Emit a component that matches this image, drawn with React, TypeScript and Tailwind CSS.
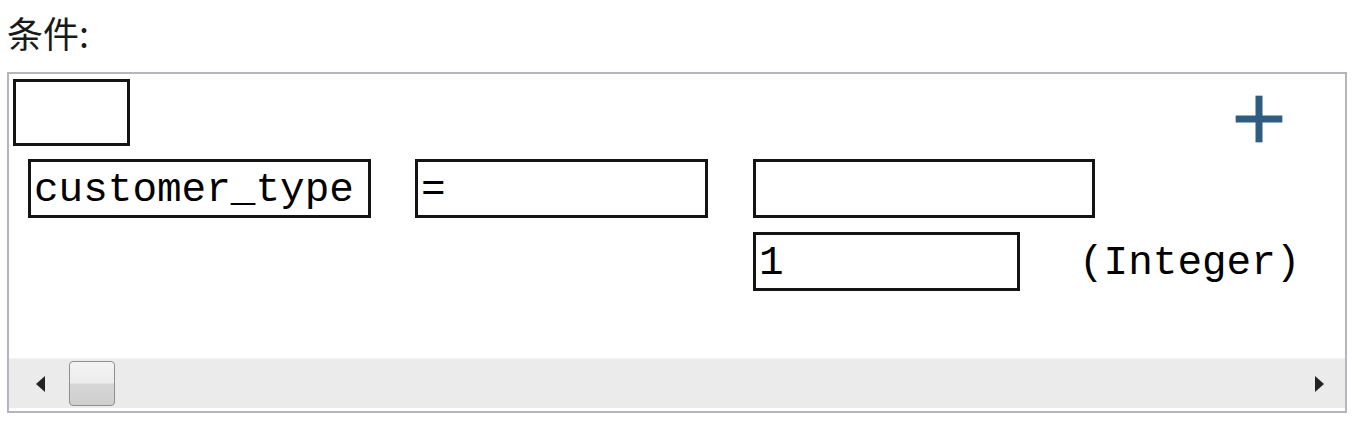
import { Plus } from 'lucide-react';

const mono = { fontFamily: '"Liberation Mono", "DejaVu Sans Mono", monospace' };

function Field({ value, className }: { value?: string; className: string }) {
  return (
    <div
      className={`h-[59px] border-[3px] border-[#141414] bg-white pl-[3px] pt-[3px] text-[41px] leading-[50px] text-black ${className}`}
      style={mono}
    >
      {value}
    </div>
  );
}

export default function App() {
  return (
    <div className="h-[428px] w-[1356px] bg-white pl-[7px] pt-[11px]">
      <div
        className="h-[43px] text-[36px] leading-[43px] text-[#1a1a1a]"
        style={{ fontFamily: '"Noto Sans CJK SC", "Noto Sans", sans-serif' }}
      >
        条件:
      </div>
      <div className="mt-[18px] flex h-[341px] w-[1340px] flex-col border-2 border-[#b5b5bd]">
        <div className="flex items-start justify-between pl-[4px] pt-[5px] pr-[46px]">
          <div className="h-[67px] w-[117px] border-[3px] border-[#141414]" />
          <Plus className="h-[80px] w-[80px] text-[#2f5d80]" strokeWidth={2.1} strokeLinecap="butt" />
        </div>
        <div className="flex items-start pl-[19px]">
          <Field value="customer_type" className="w-[343px]" />
          <Field value="=" className="ml-[44px] w-[293px]" />
          <Field className="ml-[45px] w-[342px]" />
        </div>
        <div className="mt-[14px] flex items-center pl-[744px]">
          <Field value="1" className="h-[58px] w-[267px]" />
          <span className="ml-[59px] pt-[3px] text-[41px] leading-[50px] text-black" style={mono}>
            (Integer)
          </span>
        </div>
        <div className="mt-auto mb-[3px] flex h-[50px] items-center border-t border-[#f4f4f4] bg-[#ebebeb]">
          <svg className="ml-[24px] h-[20px] w-[14px]" viewBox="0 0 14 20">
            <path d="M12 2 L3 10 L12 18 Z" fill="#222" />
          </svg>
          <div className="ml-[22px] h-[45px] w-[46px] rounded-[4px] border border-[#8f8f8f] bg-[linear-gradient(#f4f4f4_0%,#ececec_48%,#d6d6d6_52%,#cfcfcf_100%)]" />
          <div className="flex-1" />
          <svg className="mr-[18px] h-[20px] w-[14px]" viewBox="0 0 14 20">
            <path d="M2 2 L11 10 L2 18 Z" fill="#222" />
          </svg>
        </div>
      </div>
    </div>
  );
}
